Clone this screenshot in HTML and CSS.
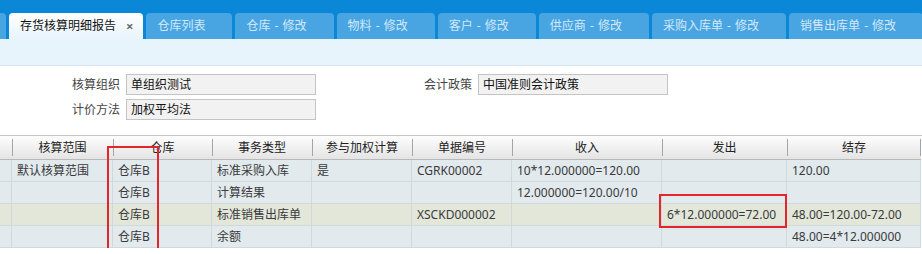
FILE: index.html
```html
<!DOCTYPE html>
<html lang="zh-CN">
<head>
<meta charset="utf-8">
<title>存货核算明细报告</title>
<link rel="stylesheet" href="styles.css">
</head>
<body>
<div class="tabbar">
  <div class="tab tab-cut"></div>
  <div class="tab active"><span>存货核算明细报告</span><span class="close">×</span></div>
  <div class="tab"><span>仓库列表</span></div>
  <div class="tab"><span>仓库 - 修改</span></div>
  <div class="tab"><span>物料 - 修改</span></div>
  <div class="tab"><span>客户 - 修改</span></div>
  <div class="tab"><span>供应商 - 修改</span></div>
  <div class="tab"><span>采购入库单 - 修改</span></div>
  <div class="tab"><span>销售出库单 - 修改</span></div>
</div>
<div class="strip"></div>
<div class="form">
  <label class="lbl">核算组织</label>
  <div class="field">单组织测试</div>
  <label class="lbl">会计政策</label>
  <div class="field">中国准则会计政策</div>
  <label class="lbl">计价方法</label>
  <div class="field">加权平均法</div>
</div>
<div class="grid-wrap">
  <div class="grid">
    <div class="hd"></div>
    <div class="hd">核算范围</div>
    <div class="hd">仓库</div>
    <div class="hd">事务类型</div>
    <div class="hd">参与加权计算</div>
    <div class="hd">单据编号</div>
    <div class="hd">收入</div>
    <div class="hd">发出</div>
    <div class="hd last">结存</div>

    <div class="c"></div><div class="c">默认核算范围</div><div class="c">仓库B</div><div class="c">标准采购入库</div><div class="c">是</div><div class="c">CGRK00002</div><div class="c">10*12.000000=120.00</div><div class="c"></div><div class="c last">120.00</div>

    <div class="c"></div><div class="c"></div><div class="c">仓库B</div><div class="c">计算结果</div><div class="c"></div><div class="c"></div><div class="c">12.000000=120.00/10</div><div class="c"></div><div class="c last"></div>

    <div class="c g"></div><div class="c g"></div><div class="c g">仓库B</div><div class="c g">标准销售出库单</div><div class="c g"></div><div class="c g">XSCKD000002</div><div class="c g"></div><div class="c g">6*12.000000=72.00</div><div class="c g last">48.00=120.00-72.00</div>

    <div class="c"></div><div class="c"></div><div class="c">仓库B</div><div class="c">余额</div><div class="c"></div><div class="c"></div><div class="c"></div><div class="c"></div><div class="c last">48.00=4*12.000000</div>
  </div>
  <div class="mark mark-a"></div>
  <div class="mark mark-b"></div>
</div>
</body>
</html>
```

FILE: styles.css
```css
* { box-sizing: border-box; }
html, body {
  margin: 0;
  background: #ffffff;
  font-family: "Noto Sans", "Noto Sans CJK SC", sans-serif;
  font-size: 12px;
}

.tabbar {
  height: 39px;
  background: #0b87d8;
  padding-top: 13px;
  display: flex;
  gap: 3px;
  overflow: hidden;
  white-space: nowrap;
}
.tab {
  flex: none;
  height: 26px;
  padding: 0 27px 0 11px;
  display: flex;
  align-items: center;
  background: #48a5e2;
  color: #d2e8f8;
  border-radius: 4px 4px 0 0;
  line-height: 1;
  word-spacing: 1px;
}
.tab-cut {
  width: 6px;
  padding: 0;
  border-radius: 0 4px 0 0;
}
.tab.active {
  background: linear-gradient(#ffffff, #e8f4fc);
  color: #111111;
  padding: 0 10px 0 11px;
}
.close {
  margin-left: 10px;
  color: #6a6a6a;
  font-weight: bold;
  font-size: 13px;
}

.strip {
  height: 27px;
  background: #e8f4fc;
  border-bottom: 1px solid #d3e5f2;
}

.form {
  display: grid;
  grid-template-columns: 120px 190px 150px 190px;
  grid-auto-rows: 21px;
  column-gap: 6px;
  row-gap: 4px;
  padding: 8px 0 0 0;
  height: 70px;
  border-bottom: 1px solid #c6c6c6;
}
.lbl {
  text-align: right;
  color: #444444;
  line-height: 21px;
}
.field {
  background: #f2f2f2;
  border: 1px solid #c4c4c4;
  color: #111111;
  line-height: 19px;
  padding-left: 4px;
}

.grid-wrap {
  position: relative;
}
.grid {
  display: grid;
  grid-template-columns: 12px 101px 99px 100px 100px 100px 150px 125px 134px;
  width: 922px;
}
.hd {
  position: relative;
  height: 24px;
  background: linear-gradient(#fdfdfd, #e4e4e4);
  border-bottom: 1px solid #b9b9b9;
  text-align: center;
  line-height: 23px;
  color: #222222;
}
.hd + .hd::before {
  content: "";
  position: absolute;
  left: 0;
  top: 3px;
  height: 17px;
  border-left: 1px solid #9fa5a8;
}
.hd.last::after {
  content: "";
  position: absolute;
  right: 0;
  top: 3px;
  height: 17px;
  border-left: 1px solid #9fa5a8;
}
.c {
  height: 22px;
  background: #e2eaee;
  border-bottom: 1px solid #d1d9dd;
  border-right: 1px solid #d1d9dd;
  padding-left: 5px;
  line-height: 21px;
  color: #3a3a3a;
  white-space: nowrap;
  overflow: hidden;
}
.c.g { background: #e2e7da; }

.mark {
  position: absolute;
  border: 2px solid #e3262c;
}
.mark-a {
  left: 107px;
  top: 10px;
  width: 52px;
  height: 104px;
}
.mark-b {
  left: 659px;
  top: 58px;
  width: 128px;
  height: 34px;
}
```
